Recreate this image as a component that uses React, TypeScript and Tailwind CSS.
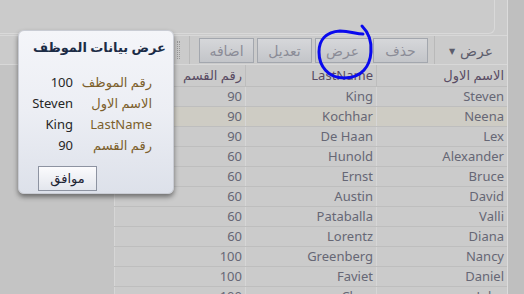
import React from 'react';

const FONT = { fontFamily: '"Noto Sans","DejaVu Sans",sans-serif' };

const ROWS = [
  { first: 'Steven', last: 'King', dept: 90 },
  { first: 'Neena', last: 'Kochhar', dept: 90 },
  { first: 'Lex', last: 'De Haan', dept: 90 },
  { first: 'Alexander', last: 'Hunold', dept: 60 },
  { first: 'Bruce', last: 'Ernst', dept: 60 },
  { first: 'David', last: 'Austin', dept: 60 },
  { first: 'Valli', last: 'Pataballa', dept: 60 },
  { first: 'Diana', last: 'Lorentz', dept: 60 },
  { first: 'Nancy', last: 'Greenberg', dept: 100 },
  { first: 'Daniel', last: 'Faviet', dept: 100 },
  { first: 'John', last: 'Chen', dept: 100 },
];

const FIELDS = [
  { label: 'رقم الموظف', value: '100' },
  { label: 'الاسم الاول', value: 'Steven' },
  { label: 'LastName', value: 'King' },
  { label: 'رقم القسم', value: '90' },
];

function ToolButton({ label }: { label: string }) {
  return (
    <div className="w-[55px] h-[25px] flex items-center justify-center border border-[#a3a7ae] bg-gradient-to-b from-[#d6d7da] to-[#c3c5c9] text-[14px] text-[#8b8c97]">
      {label}
    </div>
  );
}

export default function App() {
  return (
    <div className="relative w-[524px] h-[294px] overflow-hidden bg-[#bfbfbf]" style={FONT}>
      <div className="w-[508px] h-full flex flex-col bg-[#cbcbcb] border-r border-[#dcdcdc]">
        {/* top panel */}
        <div className="h-[34px] w-[495px] border-r border-b border-[#d9d9d9] rounded-br-[6px] shrink-0" />
        {/* toolbar */}
        <div dir="rtl" className="h-[30px] shrink-0 flex items-center border-t border-b border-[#d8d8d8] mt-px">
          <div className="w-[73px] h-full flex items-center justify-center gap-[5px] border-l border-[#b9b9b9] text-[14px] text-[#5c5d6c]">
            <span>عرض</span>
            <span className="text-[8px] mt-[2px]">▼</span>
          </div>
          <div className="flex gap-[3px] mr-[6px]">
            <ToolButton label="حذف" />
            <ToolButton label="عرض" />
            <ToolButton label="تعديل" />
            <ToolButton label="اضافه" />
          </div>
          <div className="h-full border-l border-[#b9b9b9] mr-[9px]" />
          <div className="h-[18px] w-[3px] mr-[9px] border-x border-dotted border-[#9a9a9a]" />
        </div>
        {/* grid */}
        <div className="flex flex-1 min-h-0">
          <div className="w-[114px] bg-[#c4c4c4] shrink-0" />
          <div dir="rtl" className="flex-1 text-[13px]">
            <div className="grid grid-cols-[131px_131px_131px] h-[22px] border-b border-[#bdbdbd] text-[#594b63]">
              <div className="px-[3px] leading-[21px] border-l border-[#bdbdbd]">الاسم الاول</div>
              <div className="px-[3px] leading-[21px] border-l border-[#bdbdbd]">LastName</div>
              <div className="px-[3px] leading-[21px] border-l border-[#d6d6d6]">رقم القسم</div>
            </div>
            {ROWS.map((r, i) => (
              <div
                key={r.first}
                className={`grid grid-cols-[131px_131px_131px] h-[20px] border-b border-[#bebebe] text-[#666775] ${i === 1 ? 'bg-[#ceccc4]' : ''}`}
              >
                <div className="px-[3px] leading-[19px] border-l border-[#d6d6d6]">{r.first}</div>
                <div className="px-[3px] leading-[19px] border-l border-[#d6d6d6]">{r.last}</div>
                <div className="px-[3px] leading-[19px] border-l border-[#d6d6d6]">{r.dept}</div>
              </div>
            ))}
          </div>
        </div>
      </div>

      {/* dialog */}
      <div
        dir="rtl"
        className="absolute left-[18px] top-[30px] w-[156px] h-[164px] rounded-[6px] bg-gradient-to-b from-[#f4f5f9] via-[#eceef4] to-[#dde1ea] border border-[#c9ccd4] shadow-[0_3px_5px_rgba(0,0,0,0.45)] flex flex-col"
      >
        <div className="pr-[7px] pt-[5px] text-[13px] font-bold text-[#1c2c46] leading-[22px] whitespace-nowrap">عرض بيانات الموظف</div>
        <div className="mt-[14px] pr-[21px] flex flex-col">
          {FIELDS.map(f => (
            <div key={f.label} className="flex h-[21px] items-center text-[13px]">
              <div className="w-[79px] text-[#7c5f2c]">{f.label}</div>
              <div className="text-[#262626]" dir="ltr">{f.value}</div>
            </div>
          ))}
        </div>
        <div className="mt-[10px] mr-[76px] w-[59px] h-[25px] flex items-center justify-center border border-[#8d93a1] bg-gradient-to-b from-[#fbfbfd] to-[#e3e6ed] text-[13px] text-[#1e2433]">
          موافق
        </div>
      </div>

      {/* hand-drawn mark */}
      <svg className="absolute left-0 top-0 pointer-events-none" width="524" height="294">
        <path
          d="M362,26 C368,32 372,40 371,52 C370,66 362,78 344,78 C328,78 319,66 319,52 C319,40 326,32 340,31 C350,31 356,34 363,34"
          fill="none"
          stroke="#0a0aee"
          strokeWidth="3"
          strokeLinecap="round"
        />
      </svg>
    </div>
  );
}
